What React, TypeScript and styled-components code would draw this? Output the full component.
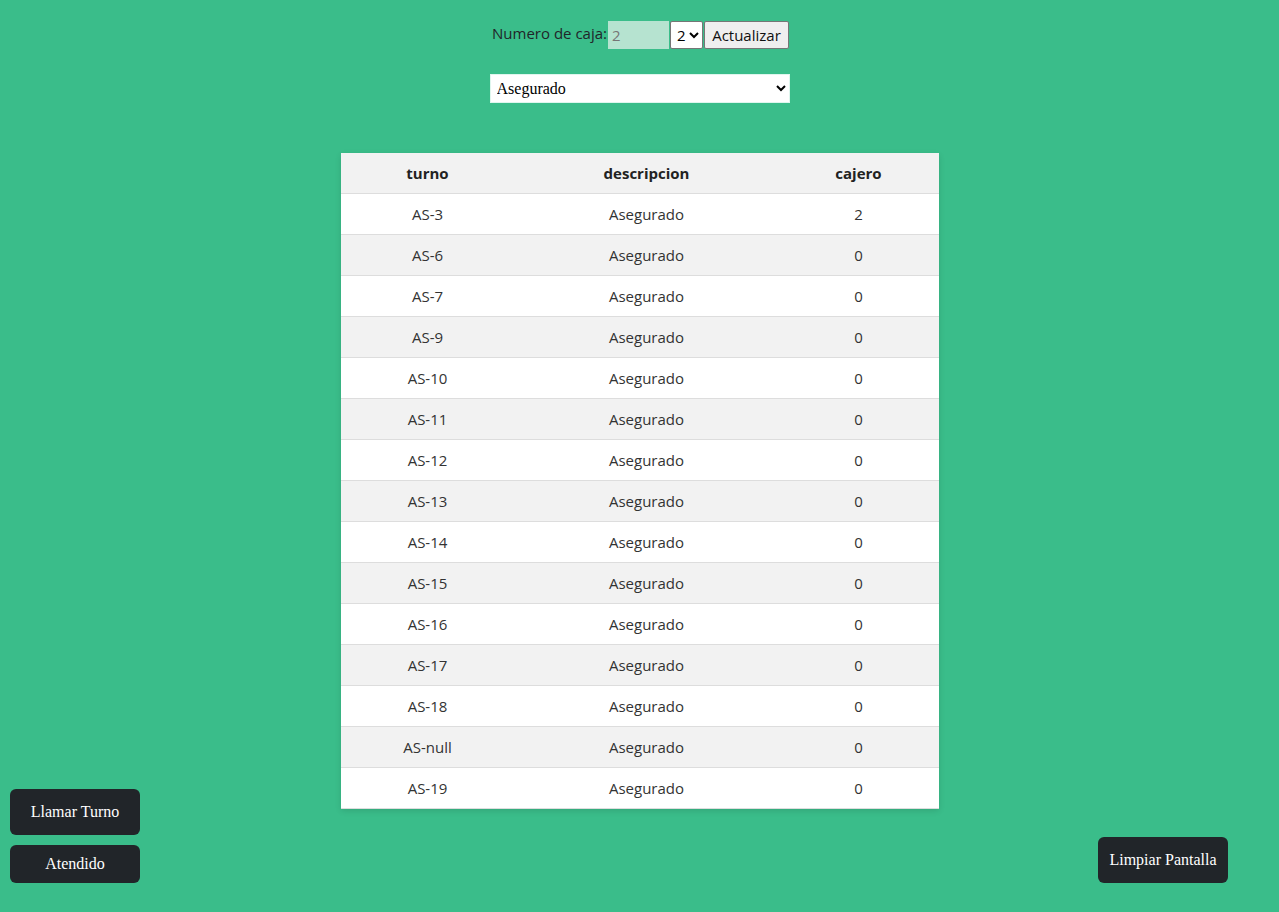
import React from "react";
import styled, { createGlobalStyle } from "styled-components";

const Global = createGlobalStyle`
  html, body { margin: 0; padding: 0; }
  body {
    background: #3abd8a;
    font-family: "Open Sans", "Noto Sans", sans-serif;
    color: #212529;
  }
`;

const Page = styled.div`
  min-height: 100vh;
  display: grid;
  grid-template-columns: 1fr auto 1fr;
  box-sizing: border-box;
`;

const Side = styled.div<{ $align: "start" | "end" }>`
  display: flex;
  flex-direction: column;
  justify-content: flex-end;
  align-items: ${(p) => (p.$align === "start" ? "flex-start" : "flex-end")};
  gap: 10px;
  padding: 0 ${(p) => (p.$align === "end" ? "51px" : "0")} 29px
    ${(p) => (p.$align === "start" ? "10px" : "0")};
`;

const Center = styled.main`
  display: flex;
  flex-direction: column;
  align-items: center;
  padding-top: 21px;
`;

const Toolbar = styled.form`
  display: flex;
  align-items: center;
  font-size: 15px;
  margin: 0 0 0 2px;
`;

const Label = styled.label`
  font-size: 15px;
  margin-right: 1px;
  position: relative;
  top: -2px;
`;

const NumInput = styled.input`
  width: 61px;
  height: 28px;
  box-sizing: border-box;
  border: none;
  background: #b6e3d0;
  color: #6b8f80;
  font-family: inherit;
  font-size: 15px;
  padding: 0 4px;
`;

const SmallSelect = styled.select`
  height: 28px;
  width: 33px;
  margin-left: 1px;
  font-family: inherit;
  font-size: 15px;
  background: #fff;
  border: 1px solid #767676;
  border-radius: 2px;
  padding: 0 0 0 2px;
`;

const PlainButton = styled.button`
  height: 28px;
  margin-left: 1px;
  width: 85px;
  font-family: inherit;
  font-size: 15px;
  background: #efefef;
  border: 1px solid #767676;
  border-radius: 2px;
  color: #111;
  padding: 0;
`;

const TypeSelect = styled.select`
  margin-top: 25px;
  width: 300px;
  height: 29px;
  font-family: "Liberation Serif", serif;
  font-size: 16px;
  background: #fff;
  border: 1px solid #dff6ee;
  color: #000;
  padding: 0 2px;
`;

const Table = styled.table`
  margin-top: 50px;
  width: 598px;
  border-collapse: collapse;
  background: #fff;
  box-shadow: 0 2px 6px rgba(0, 0, 0, 0.12);
  font-size: 15px;
  color: #333;
`;

const Th = styled.th<{ $w: number }>`
  width: ${(p) => p.$w}px;
  height: 40px;
  padding: 0;
  background: #f2f2f2;
  font-weight: 700;
  color: #222;
  text-align: center;
  border-bottom: 1px solid #ddd;
`;

const Tr = styled.tr<{ $alt: boolean }>`
  background: ${(p) => (p.$alt ? "#f2f2f2" : "#fff")};
`;

const Td = styled.td`
  height: 40px;
  padding: 0;
  text-align: center;
  border-bottom: 1px solid #ddd;
`;

const DarkButton = styled.button<{ $h: number }>`
  width: 130px;
  height: ${(p) => p.$h}px;
  background: #212529;
  color: #fff;
  border: none;
  border-radius: 6px;
  font-family: "Liberation Serif", serif;
  font-size: 16px;
  padding: 0;
`;

const rows = [
  "AS-3", "AS-6", "AS-7", "AS-9", "AS-10", "AS-11", "AS-12", "AS-13",
  "AS-14", "AS-15", "AS-16", "AS-17", "AS-18", "AS-null", "AS-19",
];

export default function App() {
  return (
    <>
      <Global />
      <Page>
        <Side $align="start">
          <DarkButton $h={46}>Llamar Turno</DarkButton>
          <DarkButton $h={38}>Atendido</DarkButton>
        </Side>
        <Center>
          <Toolbar onSubmit={(e) => e.preventDefault()}>
            <Label>Numero de caja:</Label>
            <NumInput placeholder="2" />
            <SmallSelect defaultValue="2">
              <option>1</option>
              <option>2</option>
              <option>3</option>
            </SmallSelect>
            <PlainButton type="button">Actualizar</PlainButton>
          </Toolbar>
          <TypeSelect defaultValue="Asegurado">
            <option>Asegurado</option>
            <option>No asegurado</option>
          </TypeSelect>
          <Table>
            <thead>
              <tr>
                <Th $w={174}>turno</Th>
                <Th $w={264}>descripcion</Th>
                <Th $w={160}>cajero</Th>
              </tr>
            </thead>
            <tbody>
              {rows.map((r, i) => (
                <Tr key={r} $alt={i % 2 === 1}>
                  <Td>{r}</Td>
                  <Td>Asegurado</Td>
                  <Td>{i === 0 ? "2" : "0"}</Td>
                </Tr>
              ))}
            </tbody>
          </Table>
        </Center>
        <Side $align="end">
          <DarkButton $h={46}>Limpiar Pantalla</DarkButton>
        </Side>
      </Page>
    </>
  );
}
